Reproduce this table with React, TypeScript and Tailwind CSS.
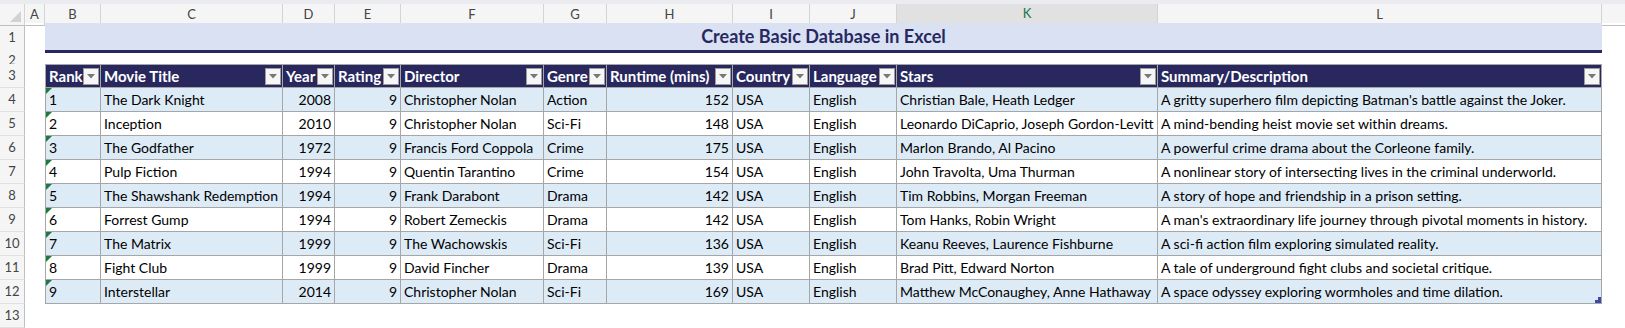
import { Fragment } from 'react'

type Movie = {
  rank: string
  title: string
  year: number
  rating: number
  director: string
  genre: string
  runtime: number
  country: string
  language: string
  stars: string
  summary: string
}

const movies: Movie[] = [
  { rank: '1', title: 'The Dark Knight', year: 2008, rating: 9, director: 'Christopher Nolan', genre: 'Action', runtime: 152, country: 'USA', language: 'English', stars: 'Christian Bale, Heath Ledger', summary: "A gritty superhero film depicting Batman's battle against the Joker." },
  { rank: '2', title: 'Inception', year: 2010, rating: 9, director: 'Christopher Nolan', genre: 'Sci-Fi', runtime: 148, country: 'USA', language: 'English', stars: 'Leonardo DiCaprio, Joseph Gordon-Levitt', summary: 'A mind-bending heist movie set within dreams.' },
  { rank: '3', title: 'The Godfather', year: 1972, rating: 9, director: 'Francis Ford Coppola', genre: 'Crime', runtime: 175, country: 'USA', language: 'English', stars: 'Marlon Brando, Al Pacino', summary: 'A powerful crime drama about the Corleone family.' },
  { rank: '4', title: 'Pulp Fiction', year: 1994, rating: 9, director: 'Quentin Tarantino', genre: 'Crime', runtime: 154, country: 'USA', language: 'English', stars: 'John Travolta, Uma Thurman', summary: 'A nonlinear story of intersecting lives in the criminal underworld.' },
  { rank: '5', title: 'The Shawshank Redemption', year: 1994, rating: 9, director: 'Frank Darabont', genre: 'Drama', runtime: 142, country: 'USA', language: 'English', stars: 'Tim Robbins, Morgan Freeman', summary: 'A story of hope and friendship in a prison setting.' },
  { rank: '6', title: 'Forrest Gump', year: 1994, rating: 9, director: 'Robert Zemeckis', genre: 'Drama', runtime: 142, country: 'USA', language: 'English', stars: 'Tom Hanks, Robin Wright', summary: "A man's extraordinary life journey through pivotal moments in history." },
  { rank: '7', title: 'The Matrix', year: 1999, rating: 9, director: 'The Wachowskis', genre: 'Sci-Fi', runtime: 136, country: 'USA', language: 'English', stars: 'Keanu Reeves, Laurence Fishburne', summary: 'A sci-fi action film exploring simulated reality.' },
  { rank: '8', title: 'Fight Club', year: 1999, rating: 9, director: 'David Fincher', genre: 'Drama', runtime: 139, country: 'USA', language: 'English', stars: 'Brad Pitt, Edward Norton', summary: 'A tale of underground fight clubs and societal critique.' },
  { rank: '9', title: 'Interstellar', year: 2014, rating: 9, director: 'Christopher Nolan', genre: 'Sci-Fi', runtime: 169, country: 'USA', language: 'English', stars: 'Matthew McConaughey, Anne Hathaway', summary: 'A space odyssey exploring wormholes and time dilation.' },
]

const headers = [
  'Rank',
  'Movie Title',
  'Year',
  'Rating',
  'Director',
  'Genre',
  'Runtime (mins)',
  'Country',
  'Language',
  'Stars',
  'Summary/Description',
]

const letters = ['A', 'B', 'C', 'D', 'E', 'F', 'G', 'H', 'I', 'J', 'K', 'L']

const grid =
  'grid grid-cols-[25px_20px_56px_182px_52px_66px_143px_63px_126px_77px_87px_261px_444px_1fr]'
const rowHead =
  'flex items-center justify-center border-r border-b border-r-[#bfbfbf] border-b-[#e1e1e1] bg-[#f5f5f5] text-[13px] text-[#444]'
const cell =
  'relative flex items-center overflow-hidden whitespace-nowrap border-r border-b border-[#a6a6a6] px-[3px]'

function Dropdown() {
  return (
    <span className="absolute right-[1px] top-[3px] flex h-[17px] w-[16px] items-center justify-center border border-[#9c9c9c] bg-[#f6f6f6]">
      <svg width="8" height="5" viewBox="0 0 8 5">
        <path d="M0 0h8L4 4.5z" fill="#777" />
      </svg>
    </span>
  )
}

function GreenTick() {
  return (
    <svg className="absolute left-0 top-0" width="6" height="6" viewBox="0 0 6 6">
      <path d="M0 0h6L0 6z" fill="#1c7a3c" />
    </svg>
  )
}

export default function App() {
  return (
    <div
      className="h-[328px] w-[1625px] overflow-hidden bg-white text-black"
      style={{ fontFamily: 'Lato, "Open Sans", sans-serif' }}
    >
      {/* column letters */}
      <div className={`${grid} h-[23px] border-t-4 border-t-[#eaecef] bg-[#f5f5f5]`}>
        <div className="relative border-r border-b border-r-[#d4d4d4] border-b-[#bfbfbf]">
          <svg className="absolute bottom-[3px] right-[3px]" width="11" height="11" viewBox="0 0 11 11">
            <path d="M11 0v11H0z" fill="#d2d2d2" />
          </svg>
        </div>
        {letters.map((l) =>
          l === 'K' ? (
            <div
              key={l}
              className="flex items-center justify-center border-r border-b-2 border-r-[#d4d4d4] border-b-[#217346] bg-[#e1e1e1] text-[13px] text-[#217346]"
            >
              {l}
            </div>
          ) : (
            <div
              key={l}
              className="flex items-center justify-center border-r border-b border-r-[#d4d4d4] border-b-[#bfbfbf] text-[13px] text-[#444]"
            >
              {l}
            </div>
          )
        )}
        <div className="border-b border-b-[#bfbfbf]" />
      </div>

      {/* row 1: title */}
      <div className={`${grid} h-[28px]`}>
        <div className={rowHead}>1</div>
        <div />
        <div className="col-span-11 flex items-center justify-center border-b-[3px] border-[#272862] bg-[#d9e1f2] text-[18px] font-bold text-[#272862]">
          Create Basic Database in Excel
        </div>
        <div />
      </div>

      {/* row 2 */}
      <div className={`${grid} h-[13px]`}>
        <div className={`${rowHead} text-[12px]`}>2</div>
      </div>

      {/* row 3: table headers */}
      <div className={`${grid} h-[24px]`}>
        <div className={rowHead}>3</div>
        <div />
        {headers.map((h, i) => (
          <div
            key={h}
            className={`${cell} border-t bg-[#28285f] text-[15px] font-bold text-white ${i === 0 ? 'border-l' : ''}`}
          >
            {h}
            <Dropdown />
          </div>
        ))}
      </div>

      {/* data rows */}
      {movies.map((m, idx) => {
        const bg = idx % 2 === 0 ? 'bg-[#ddebf7]' : 'bg-white'
        const last = idx === movies.length - 1
        return (
          <div key={m.rank} className={`${grid} h-[24px] text-[14px]`}>
            <div className={rowHead}>{idx + 4}</div>
            <div />
            <div className={`${cell} ${bg} border-l`}>
              <GreenTick />
              {m.rank}
            </div>
            <div className={`${cell} ${bg}`}>{m.title}</div>
            <div className={`${cell} ${bg} justify-end`}>{m.year}</div>
            <div className={`${cell} ${bg} justify-end`}>{m.rating}</div>
            <div className={`${cell} ${bg}`}>{m.director}</div>
            <div className={`${cell} ${bg}`}>{m.genre}</div>
            <div className={`${cell} ${bg} justify-end`}>{m.runtime}</div>
            <div className={`${cell} ${bg}`}>{m.country}</div>
            <div className={`${cell} ${bg}`}>{m.language}</div>
            <div className={`${cell} ${bg}`}>{m.stars}</div>
            <div className={`${cell} ${bg}`}>
              {m.summary}
              {last && (
                <Fragment>
                  <span className="absolute bottom-0 right-0 h-[3px] w-[6px] bg-[#3f48a8]" />
                  <span className="absolute bottom-0 right-0 h-[6px] w-[3px] bg-[#3f48a8]" />
                </Fragment>
              )}
            </div>
          </div>
        )
      })}

      {/* row 13 */}
      <div className={`${grid} h-[24px]`}>
        <div className={rowHead}>13</div>
      </div>
    </div>
  )
}
